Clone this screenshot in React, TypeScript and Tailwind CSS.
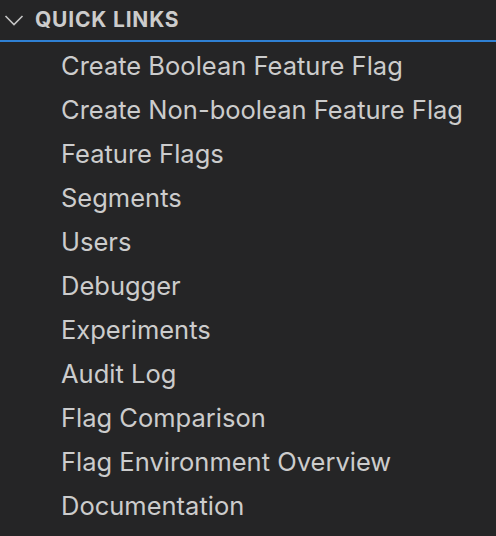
import React from "react";

const items = [
  "Create Boolean Feature Flag",
  "Create Non-boolean Feature Flag",
  "Feature Flags",
  "Segments",
  "Users",
  "Debugger",
  "Experiments",
  "Audit Log",
  "Flag Comparison",
  "Flag Environment Overview",
  "Documentation",
];

export default function App() {
  return (
    <div
      className="w-[496px] h-[536px] bg-[#252526] overflow-hidden text-[#cccccc]"
      style={{ fontFamily: "Inter, 'Noto Sans', sans-serif" }}
    >
      <div className="h-[42px] flex items-center border-b-2 border-[#2f80d3] pb-[1px]">
        <svg width="28" height="40" viewBox="0 0 28 40" className="shrink-0">
          <polyline
            points="5.5,16 14,24.5 22.5,16"
            fill="none"
            stroke="#c5c5c5"
            strokeWidth="1.6"
          />
        </svg>
        <span className="ml-[7px] text-[21px] font-bold tracking-[0.8px]">QUICK LINKS</span>
      </div>
      <div className="flex flex-col pt-[2px]">
        {items.map((t) => (
          <div key={t} className="h-[44px] flex items-center pl-[61px] text-[25.5px] leading-none">
            {t}
          </div>
        ))}
      </div>
    </div>
  );
}
